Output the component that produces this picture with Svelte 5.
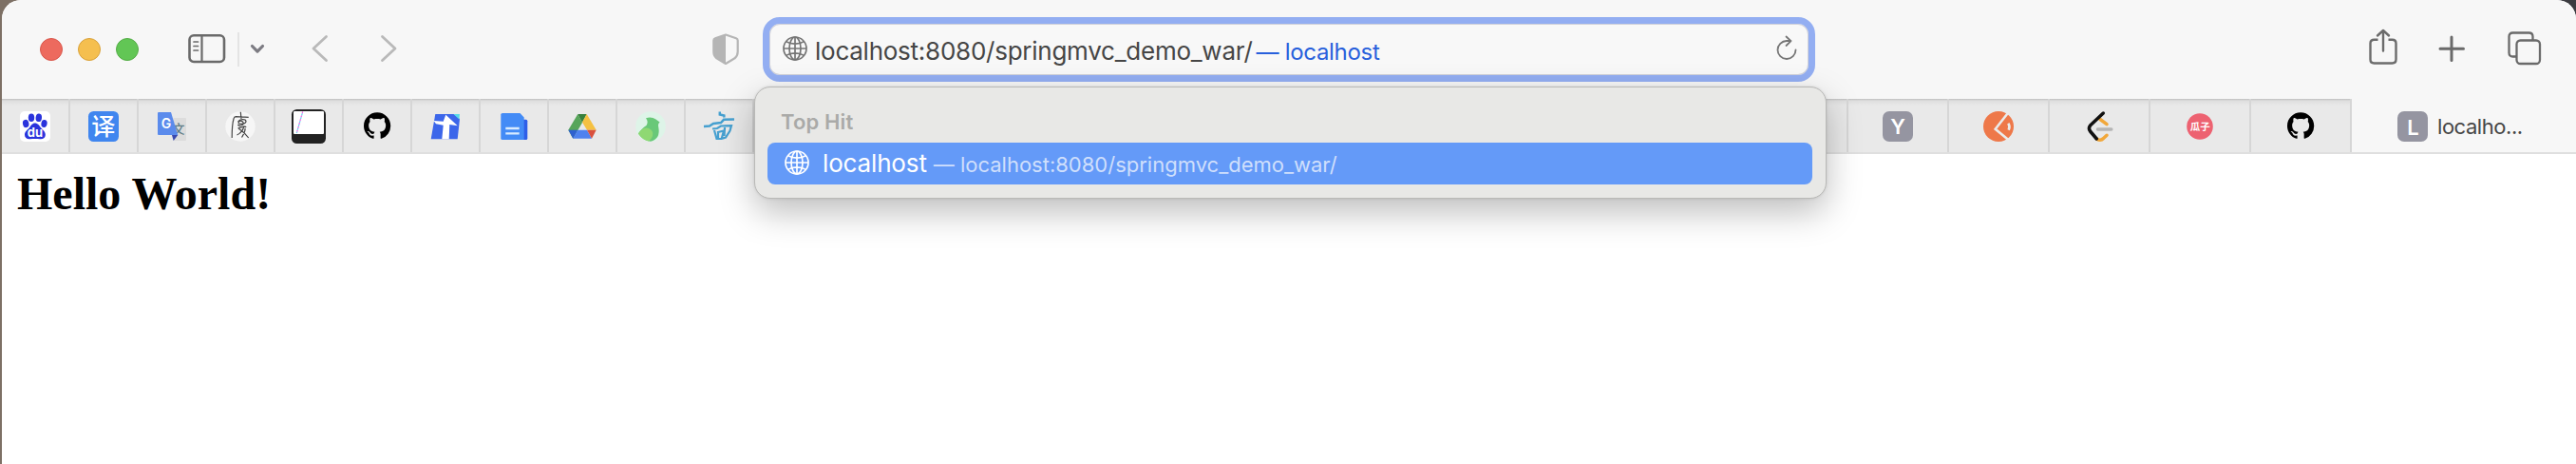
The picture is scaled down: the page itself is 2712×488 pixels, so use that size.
<script>
  const githubPath =
    'M8 0C3.58 0 0 3.58 0 8c0 3.54 2.29 6.53 5.47 7.59.4.07.55-.17.55-.38 0-.19-.01-.82-.01-1.49-2.01.37-2.53-.49-2.69-.94-.09-.23-.48-.94-.82-1.13-.28-.15-.68-.52-.01-.53.63-.01 1.08.58 1.23.82.72 1.21 1.87.87 2.33.66.07-.52.28-.87.51-1.07-1.78-.2-3.64-.89-3.64-3.95 0-.87.31-1.59.82-2.15-.08-.2-.36-1.02.08-2.12 0 0 .67-.21 2.2.82.64-.18 1.32-.27 2-.27.68 0 1.36.09 2 .27 1.53-1.04 2.2-.82 2.2-.82.44 1.1.16 1.92.08 2.12.51.56.82 1.27.82 2.15 0 3.07-1.87 3.75-3.65 3.95.29.25.54.73.54 1.48 0 1.07-.01 1.93-.01 2.2 0 .21.15.46.55.38A8.013 8.013 0 0016 8c0-4.42-3.58-8-8-8z';
  const pinned = ['baidu', 'fanyi', 'gtranslate', 'seal', 'terminal', 'github', 'tdoc', 'docs', 'drive', 'bird', 'brush'];
  const open = ['y', 'clever', 'leetcode', 'guazi', 'github'];
</script>

{#snippet globe()}
  <svg class="globe" viewBox="0 0 26 26" fill="none" stroke="currentColor" stroke-width="1.7">
    <circle cx="13" cy="13" r="12" />
    <ellipse cx="13" cy="13" rx="6" ry="12" />
    <path d="M13 1v24M1 13h24M3.6 5.6c5 3.3 13.800 3.300 18.800 0M3.600 20.400c5-3.300 13.800-3.300 18.800 0" />
  </svg>
{/snippet}

{#snippet favicon(name)}
  <svg class="favicon" viewBox="0 0 32 32">
    {#if name === 'baidu'}
      <rect width="32" height="32" rx="5" fill="#fff" />
      <g fill="#2a33dc">
        <ellipse cx="6.200" cy="13" rx="3.200" ry="4.200" transform="rotate(-12 6.200 13)" />
        <ellipse cx="12" cy="6.800" rx="3.200" ry="4.300" />
        <ellipse cx="19.800" cy="6.800" rx="3.200" ry="4.300" transform="rotate(6 19.800 6.800)" />
        <ellipse cx="25.500" cy="13" rx="3.100" ry="4" transform="rotate(10 25.500 13)" />
        <path d="M15.800 12.500c3 0 4.500 2.500 6.200 4.800 2.200 2.500 5 4.500 4.800 7.700-.200 3.500-3 4.700-5.800 4.300-3.500-.500-7-.500-10.500 0C7.500 29.700 5 28 5 24.800c0-3.300 2.800-5 5-7.500 1.700-2.300 3-4.800 5.800-4.800z" />
      </g>
      <text x="16" y="26.600" text-anchor="middle" font-size="13" font-weight="700" fill="#fff">du</text>
    {:else if name === 'fanyi'}
      <rect width="32" height="32" rx="5.500" fill="#4086ef" />
      <text class="cjk" x="15.800" y="25" text-anchor="middle" font-size="25" font-weight="500" fill="#fff">译</text>
    {:else if name === 'gtranslate'}
      <path d="M17.500 7H30q1 0 1 1v22q0 1-1 1H17.700z" fill="#dcdcdc" />
      <text class="cjk" x="23" y="23" text-anchor="middle" font-size="13" font-weight="500" fill="#607d86">文</text>
      <path d="M16 25h6.300L17.700 31z" fill="#3a49ae" />
      <path d="M2 1h13l7.300 24H2q-1 0-1-1V2q0-1 1-1z" fill="#5b8bec" />
      <text x="10" y="17.500" text-anchor="middle" font-size="14" font-weight="600" fill="#fff">G</text>
    {:else if name === 'seal'}
      <circle cx="16" cy="16" r="15.700" fill="#f6f6f6" />
      <path
        d="M7.200 28c0-8 .300-15 1.800-20 .300-1.500 1-2.200 2.300-2.300l13.400.600M16.300.8 17 8M13.500 11c2-3 8-3 8.500-.500 0 3-8 4-8 1.500 1-3 6-2 5 1.500-1 2-5 2.500-5.500.500M13.500 18c3-1 8-3 8.500-1M20 15.500c-1 4-4 8-7.500 9.500M14.500 18.500c3 2 6 4 10.200 9.500M21 18c.500 3-2 7-3.500 9.500"
        fill="none"
        stroke="#444"
        stroke-width="1.200"
      />
    {:else if name === 'terminal'}
      <rect x="-2" y="-2" width="36" height="36" rx="5.500" fill="#222" />
      <rect width="32" height="24" rx="1" fill="#fff" />
      <path d="M9.700.5 3.300 23" stroke="#f06be8" stroke-width="1.300" stroke-dasharray="2 2" />
      <path d="M9.200 2.400 3.300 23" stroke="#62d8ef" stroke-width="1.200" stroke-dasharray="2 2" />
    {:else if name === 'github'}
      <path d={githubPath} transform="translate(2 1.300) scale(1.765)" fill="#000" />
    {:else if name === 'tdoc'}
      <path d="M5.300 3H25l6 5-2.300 21.200H.700z" fill="#3c66ea" />
      <path d="M24.500 3H31l-.600 5.500z" fill="#58dbe8" />
      <path d="m16.300 3.700 12.400 11.600-8.400-1.300-.600 15.200h-7.400l1.400-14.500L6 13.200 3.500 9.900l10.200.800z" fill="#fff" />
    {:else if name === 'docs'}
      <rect x="22" y="8.700" width="8.300" height="21.300" rx="1.500" fill="#2f5fe8" />
      <path d="M4 2h18.500l4.200 4.500V30H4q-1.700 0-1.700-1.500v-25Q2.300 2 4 2z" fill="#438bf6" />
      <path d="M7.300 18h14.400M7.300 23.400h14.400" stroke="#d8ebff" stroke-width="2.400" />
    {:else if name === 'drive'}
      <path d="M11.300 3 1.300 19.700l5 9L16 12z" fill="#57a55a" />
      <path d="M11.300 3h9.400L16 12z" fill="#37803d" />
      <path d="M20.700 3 16 11.500l5 8.200h9.700z" fill="#f5c142" />
      <path d="M1.300 19.700h9.900l-4.900 9z" fill="#2f61cf" />
      <path d="M11.200 19.700H21l5 9H6.300z" fill="#4f82ee" />
      <path d="M21 19.700h9.700l-4.700 9z" fill="#d9513f" />
    {:else if name === 'bird'}
      <circle cx="16" cy="16" r="15.800" fill="#def4e8" />
      <path d="M11 7.200Q17 5.500 21.500 8.500L25.600 11.500Q23.300 13 24.300 17Q26.500 29 16 31.700Q8 31 3 23.500Q7 17.500 11.500 15Q14 11 11 7.200z" fill="#69c878" />
      <path d="M3 23.500Q8 16 14 18Q19.500 20.500 18 26Q17 29.500 14 31.500Q7 30 3 23.500z" fill="#8fd873" />
    {:else if name === 'brush'}
      <g fill="none" stroke="#46a0d0" stroke-width="2.500">
        <path d="M16.800.5v3l4.500 1v2M0 16l6-.4 4-2.600 8-1 3-3.200 11-.400" />
        <path d="M9 18.500l5-.5 4-2.500 11-.4-1.500 5.400-4.500 7-4.500 1.500h-5l-2.500-9M15 21v8M15 22l6-1.500-2.500 9M22 17l-.5 9" stroke-width="2.200" />
      </g>
    {:else if name === 'y'}
      <rect width="32" height="32" rx="7" fill="#9595a1" />
      <text x="16" y="24.300" text-anchor="middle" font-size="22" font-weight="600" fill="#fff">Y</text>
    {:else if name === 'l'}
      <rect width="32" height="32" rx="7" fill="#9595a1" />
      <text x="16.500" y="24.500" text-anchor="middle" font-size="22" font-weight="600" fill="#fff">L</text>
    {:else if name === 'clever'}
      <circle cx="16" cy="16" r="16" fill="#ee7849" />
      <path d="M27 .5 12.700 18.700 27 30.500" fill="none" stroke="#ebebeb" stroke-width="2.600" />
      <path d="M26.300 12.700q2.200 3.300.400 7" fill="none" stroke="#ebebeb" stroke-width="2.600" />
    {:else if name === 'leetcode'}
      <g fill="none" stroke-width="3.500" stroke-linecap="round" stroke-linejoin="round">
        <path d="m17 8.500 7 5.200M13.300 29c3 2 5 2 7.200-.500l3.500-3.200" stroke="#f1a73a" />
        <path d="M14.500 19h14.300" stroke="#b5b5b5" />
        <path d="M20.300 2 6.500 15q-2.200 3 0 6l6.800 8" stroke="#111" />
      </g>
    {:else if name === 'guazi'}
      <circle cx="16" cy="16" r="13.800" fill="#ed6271" />
      <text class="cjk" x="16.200" y="20" text-anchor="middle" font-size="10.500" font-weight="700" fill="#fff">瓜子</text>
    {/if}
  </svg>
{/snippet}

<div class="desktop">
  <div class="window">
    <header class="toolbar">
      <div class="lights">
        <i class="close"></i><i class="minimize"></i><i class="zoom"></i>
      </div>
      <svg class="sidebar" width="40" height="32" viewBox="0 0 40 32" fill="none" stroke="#6a6a6a">
        <rect x="1.500" y="1.300" width="36.500" height="27.700" rx="4.500" stroke-width="2.600" />
        <path d="M14.500 2v27" stroke-width="2.200" />
        <path d="M6 8h4.500M6 12.500h4.500M6 17h4.500" stroke-width="1.700" stroke-linecap="round" />
      </svg>
      <span class="rule"></span>
      <svg class="menu" width="16" height="12" viewBox="0 0 16 12"><path d="m2.500 2.500 5.500 5.600 5.500-5.600" fill="none" stroke="#7c7b82" stroke-width="3.200" stroke-linecap="round" stroke-linejoin="round" /></svg>
      <svg class="back" width="18" height="32" viewBox="0 0 18 32"><path d="M15.500 3.500 2 16l13.500 12.500" fill="none" stroke="#b9b9b9" stroke-width="2.800" stroke-linecap="round" stroke-linejoin="round" /></svg>
      <svg class="forward" width="18" height="32" viewBox="0 0 18 32"><path d="M2.500 3.500 16 16 2.500 28.500" fill="none" stroke="#b9b9b9" stroke-width="2.800" stroke-linecap="round" stroke-linejoin="round" /></svg>
      <svg class="shield" width="28" height="34" viewBox="0 0 28 34">
        <path d="M14 1.500 25 5.200q1.700.600 1.700 2.300v12q0 4-3.200 6.800L14 32 4.500 26.300Q1.300 23.500 1.300 19.500v-12q0-1.700 1.700-2.300z" fill="none" stroke="#b5b5b5" stroke-width="2.200" stroke-linejoin="round" />
        <path d="M14 1.500 3 5.200Q1.300 5.800 1.300 7.500v12q0 4 3.200 6.800L14 32z" fill="#b5b5b5" />
      </svg>
      <div class="address">
        {@render globe()}
        <span class="url">localhost:8080/springmvc_demo_war/</span>
        <span class="hint">— localhost</span>
        <svg class="reload" width="22" height="28" viewBox="0 0 22 28" fill="none" stroke="#757575" stroke-width="1.800" stroke-linecap="round" stroke-linejoin="round">
          <path d="M20.500 15.500a9.500 9.500 0 1 1-9.500-9.500h4.500M10.500 1.500l5 4.700-5 4.800" />
        </svg>
      </div>
      <svg class="share" width="30" height="40" viewBox="0 0 30 40" fill="none" stroke="#6c6c6c" stroke-width="2.400" stroke-linecap="round" stroke-linejoin="round">
        <path d="M9.500 12.700H5.500Q1.500 12.700 1.500 16.500v17q0 4 4 4h19q4 0 4-4v-17q0-3.800-4-3.800H20.500" stroke-linecap="butt" />
        <path d="M15 24.500v-21M9 8.500l6-5.500 6 5.500" />
      </svg>
      <svg class="plus" width="28" height="28" viewBox="0 0 28 28"><path d="M14 2v24.500M2 14.200h24.500" stroke="#6a6a6a" stroke-width="3" stroke-linecap="round" /></svg>
      <svg class="tabs-icon" width="36" height="36" viewBox="0 0 36 36" fill="none" stroke="#6a6a6a" stroke-width="2.300">
        <rect x="9.500" y="9.500" width="24.500" height="24.500" rx="4" />
        <path d="M9.500 26.500H5.500q-4 0-4-4v-17q0-4 4-4h17q4 0 4 4v4" />
      </svg>
    </header>

    <nav class="tabbar">
      {#each pinned as name}
        <div class="tab pinned">{@render favicon(name)}</div>
      {/each}
      <div class="tab wide"></div>
      {#each open as name}
        <div class="tab">{@render favicon(name)}</div>
      {/each}
      <div class="tab active">{@render favicon('l')}<span class="title">localho...</span></div>
    </nav>

    <main><h1>Hello World!</h1></main>
  </div>

  <div class="suggestions">
    <h2>Top Hit</h2>
    <div class="row">
      {@render globe()}
      <span class="name">localhost</span>
      <span class="path">— localhost:8080/springmvc_demo_war/</span>
    </div>
  </div>
</div>

<style>
  :global(body) {
    margin: 0;
  }
  .desktop {
    position: relative;
    box-sizing: border-box;
    width: 2712px;
    height: 488px;
    padding-left: 2px;
    overflow: hidden;
    background: linear-gradient(90deg, #7d7065 0, #7d7065 50%, #3b3b40 50%);
    font-family: Inter, 'Liberation Sans', sans-serif;
  }
  .window {
    height: 488px;
    overflow: hidden;
    border-radius: 20px 20px 0 0;
    background: #fff;
  }
  .toolbar {
    display: flex;
    align-items: center;
    box-sizing: border-box;
    height: 104px;
    padding-left: 40px;
    background: #f7f7f7;
  }
  .toolbar > * {
    flex: none;
  }
  .lights {
    display: flex;
    gap: 16px;
  }
  .lights i {
    box-sizing: border-box;
    width: 24px;
    height: 24px;
    border: 1px solid #d9574c;
    border-radius: 50%;
    background: #ed6a5e;
  }
  .lights .minimize {
    border-color: #d9a23c;
    background: #f5bf4f;
  }
  .lights .zoom {
    border-color: #55ad47;
    background: #62c655;
  }
  .sidebar {
    margin-left: 52px;
  }
  .rule {
    width: 2px;
    height: 36px;
    margin-left: 12px;
    background: #e4e4e4;
  }
  .menu {
    margin-left: 11px;
  }
  .back {
    margin: -2px 0 0 49px;
  }
  .forward {
    margin: -2px 0 0 54px;
  }
  .shield {
    margin-left: 332px;
  }
  .address {
    display: flex;
    align-items: center;
    box-sizing: border-box;
    width: 1108px;
    height: 68px;
    margin-left: 25px;
    padding: 0 12px 0 14px;
    border: 7px solid #93aef2;
    border-radius: 18px;
    background: #f8f8f8;
    box-shadow: inset 0 0 0 1px #d0d1d8;
    white-space: nowrap;
  }
  .globe {
    flex: none;
    width: 26px;
    height: 26px;
  }
  .address .globe {
    margin-top: -2px;
    color: #757575;
  }
  .url {
    margin: 4px 0 0 8px;
    color: #464646;
    font-size: 26px;
    line-height: 32px;
    letter-spacing: -0.25px;
  }
  .hint {
    margin: 5px 0 0 4px;
    color: #2860dc;
    font-size: 24px;
    line-height: 32px;
    letter-spacing: -0.3px;
  }
  .reload {
    margin: -2px 0 0 auto;
  }
  .share {
    margin: -6px 0 0 583px;
  }
  .plus {
    margin: -3px 0 0 43px;
  }
  .tabs-icon {
    margin: -3px 0 0 45px;
  }
  .tabbar {
    display: flex;
    height: 56px;
    border-bottom: 2px solid #dfdfdf;
    background: #f7f7f7;
  }
  .tab {
    display: flex;
    align-items: center;
    justify-content: center;
    flex: none;
    box-sizing: border-box;
    width: 106px;
    padding-top: 2px;
    border-right: 2px solid #d6d6d6;
    background: linear-gradient(#bfbfbf 0, #dedede 2px, #e9e9e9 7px);
  }
  .tab.pinned {
    width: 72px;
  }
  .tab.wide {
    flex: 1;
  }
  .tab.active {
    justify-content: flex-start;
    gap: 10px;
    width: 236px;
    padding-left: 48px;
    border: 0;
    background: #f7f7f7;
  }
  .favicon {
    width: 32px;
    height: 32px;
    overflow: visible;
  }
  .cjk {
    font-family: 'Noto Sans CJK SC', sans-serif;
  }
  .title {
    color: #464646;
    font-size: 22px;
    letter-spacing: -0.45px;
  }
  h1 {
    margin: 0;
    padding: 14px 0 0 16px;
    color: #000;
    font: bold 48px/56px 'Liberation Serif', serif;
  }
  .suggestions {
    position: absolute;
    top: 91px;
    left: 794px;
    box-sizing: border-box;
    width: 1129px;
    height: 118px;
    padding: 22px 14px 0;
    border: 1px solid #b9b9b7;
    border-radius: 17px;
    background: #e8e8e6;
    box-shadow: 0 14px 36px rgba(0, 0, 0, 0.26), 0 0 3px rgba(0, 0, 0, 0.12);
  }
  .suggestions h2 {
    margin: 0 0 7px 13px;
    color: #aaaaa8;
    font-size: 22px;
    font-weight: 600;
    line-height: 29px;
    letter-spacing: 0.15px;
  }
  .row {
    display: flex;
    align-items: center;
    height: 44px;
    margin-left: -1px;
    padding-left: 18px;
    border-radius: 8px;
    background: #649af8;
    white-space: nowrap;
  }
  .row .globe {
    margin-top: -2px;
    color: #fff;
  }
  .name {
    margin-left: 14px;
    color: #fff;
    font-size: 26px;
    line-height: 32px;
    letter-spacing: -0.15px;
  }
  .path {
    margin: 2px 0 0 7px;
    color: #cfdffc;
    font-size: 22px;
    line-height: 32px;
  }
</style>
